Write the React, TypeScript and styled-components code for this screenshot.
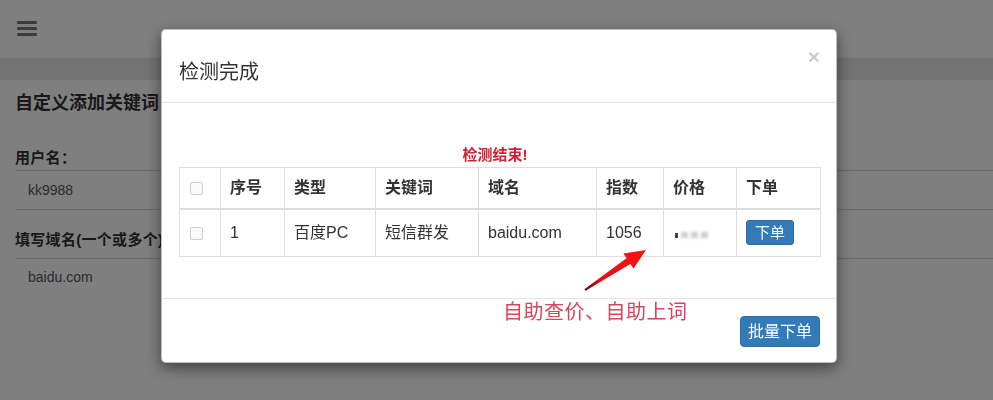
import styled, { createGlobalStyle } from "styled-components";

const GlobalStyle = createGlobalStyle`
  html, body {
    margin: 0;
    padding: 0;
    width: 993px;
    height: 400px;
    overflow: hidden;
    background: #fefefe;
    font-family: "Liberation Sans", "Noto Sans CJK SC", sans-serif;
    color: #333;
  }
  * { box-sizing: border-box; }
`;

const Page = styled.div`
  width: 993px;
  height: 400px;
  overflow: hidden;
`;

const TopBar = styled.div`
  height: 58px;
  display: flex;
  align-items: center;
  padding-left: 17px;
  background: #fff;
  border-bottom: 1px solid #f2f2f2;
`;

const Burger = styled.div`
  display: flex;
  flex-direction: column;
  gap: 3px;
  span {
    display: block;
    width: 20px;
    height: 3px;
    border-radius: 1px;
    background: #777;
  }
`;

const Band = styled.div`
  height: 22px;
  background: #e6e6e6;
`;

const Content = styled.div`
  padding: 11px 0 0 15px;
`;

const PanelTitle = styled.div`
  font-size: 18px;
  font-weight: bold;
  line-height: 24px;
  color: #333;
`;

const Label = styled.div<{ $gap: number }>`
  margin-top: ${(p) => p.$gap}px;
  font-size: 15px;
  font-weight: bold;
  line-height: 20px;
  letter-spacing: 0.3px;
  color: #333;
`;

const Field = styled.div<{ $tall?: boolean }>`
  margin-top: ${(p) => (p.$tall ? 8 : 2)}px;
  height: ${(p) => (p.$tall ? 200 : 40)}px;
  border-top: 1px solid #d6d6d6;
  border-bottom: 1px solid #d6d6d6;
  padding: ${(p) => (p.$tall ? "10px 13px" : "0 13px")};
  display: flex;
  align-items: ${(p) => (p.$tall ? "flex-start" : "center")};
  font-size: 14px;
  color: #555;
  background: #fff;
`;

const Backdrop = styled.div`
  position: fixed;
  inset: 0;
  background: rgba(0, 0, 0, 0.5);
`;

const Modal = styled.div`
  position: fixed;
  top: 29px;
  left: 161px;
  width: 676px;
  background: #fff;
  border: 1px solid rgba(0, 0, 0, 0.25);
  border-radius: 5px;
  box-shadow: 0 5px 15px rgba(0, 0, 0, 0.5);
`;

const ModalHeader = styled.div`
  display: flex;
  justify-content: space-between;
  align-items: flex-start;
  padding: 28px 16px 16px 17px;
  border-bottom: 1px solid #e5e5e5;
`;

const ModalTitle = styled.h4`
  margin: 0;
  font-size: 20px;
  font-weight: normal;
  line-height: 28px;
  color: #333;
`;

const Close = styled.span`
  margin-top: -12px;
  font-size: 21px;
  font-weight: bold;
  line-height: 21px;
  color: #000;
  opacity: 0.2;
`;

const ModalBody = styled.div`
  padding: 42px 17px 41px 17px;
`;

const Notice = styled.div`
  text-align: center;
  font-size: 15px;
  font-weight: bold;
  line-height: 20px;
  color: #cc2233;
  margin-bottom: 2px;
  padding-left: 2px;
  padding-right: 10px;
`;

const Table = styled.table`
  width: 641px;
  border-collapse: collapse;
  table-layout: fixed;
  font-size: 16px;
`;

const Th = styled.th<{ $w: number }>`
  width: ${(p) => p.$w}px;
  text-align: left;
  font-weight: bold;
  line-height: 20px;
  padding: 10px 9px;
  border: 1px solid #ddd;
  border-bottom-width: 2px;
  color: #333;
`;

const Td = styled.td`
  height: 47px;
  line-height: 22px;
  padding: 0 9px;
  border: 1px solid #ddd;
  color: #333;
  vertical-align: middle;
`;

const Check = styled.span`
  display: inline-block;
  width: 13px;
  height: 13px;
  margin-left: 1px;
  vertical-align: middle;
  border: 1px solid #cfcfcf;
  border-radius: 2px;
  background: #fafafa;
`;

const Masked = styled.span`
  display: inline-flex;
  align-items: center;
  gap: 3px;
  padding-left: 2px;
  i {
    display: block;
    width: 3px;
    height: 5px;
    background: #444;
  }
  b {
    display: block;
    width: 7px;
    height: 6px;
    background: #ccc;
    filter: blur(1.5px);
  }
`;

const Button = styled.button<{ $small?: boolean }>`
  display: inline-block;
  vertical-align: middle;
  font-family: inherit;
  font-size: ${(p) => (p.$small ? 15 : 16)}px;
  line-height: ${(p) => (p.$small ? 19 : 21)}px;
  padding: ${(p) => (p.$small ? "2px 8px" : "4px 7px")};
  color: #fff;
  background: #337ab7;
  border: 1px solid #2e6da4;
  border-radius: ${(p) => (p.$small ? 3 : 4)}px;
`;

const ModalFooter = styled.div`
  display: flex;
  justify-content: flex-end;
  padding: 17px 16px 15px;
  border-top: 1px solid #e5e5e5;
`;

const Annotation = styled.svg`
  position: fixed;
  inset: 0;
  pointer-events: none;
`;

const Note = styled.div`
  position: fixed;
  left: 503px;
  top: 299px;
  font-size: 20px;
  line-height: 26px;
  letter-spacing: 0.5px;
  color: #d6455d;
`;

const columns = [
  { key: "check", w: 41 },
  { key: "序号", w: 64 },
  { key: "类型", w: 91 },
  { key: "关键词", w: 103 },
  { key: "域名", w: 118 },
  { key: "指数", w: 67 },
  { key: "价格", w: 73 },
  { key: "下单", w: 84 },
];

export default function App() {
  return (
    <>
      <GlobalStyle />
      <Page>
        <TopBar>
          <Burger>
            <span />
            <span />
            <span />
          </Burger>
        </TopBar>
        <Band />
        <Content>
          <PanelTitle>自定义添加关键词</PanelTitle>
          <Label $gap={33}>用户名：</Label>
          <Field>kk9988</Field>
          <Label $gap={20}>填写域名(一个或多个)</Label>
          <Field $tall>baidu.com</Field>
        </Content>
      </Page>

      <Backdrop />

      <Modal>
        <ModalHeader>
          <ModalTitle>检测完成</ModalTitle>
          <Close>×</Close>
        </ModalHeader>
        <ModalBody>
          <Notice>检测结束!</Notice>
          <Table>
            <thead>
              <tr>
                {columns.map((c) => (
                  <Th key={c.key} $w={c.w}>
                    {c.key === "check" ? <Check /> : c.key}
                  </Th>
                ))}
              </tr>
            </thead>
            <tbody>
              <tr>
                <Td>
                  <Check />
                </Td>
                <Td>1</Td>
                <Td>百度PC</Td>
                <Td>短信群发</Td>
                <Td>baidu.com</Td>
                <Td>1056</Td>
                <Td>
                  <Masked>
                    <i />
                    <b />
                    <b />
                    <b />
                  </Masked>
                </Td>
                <Td>
                  <Button $small>下单</Button>
                </Td>
              </tr>
            </tbody>
          </Table>
        </ModalBody>
        <ModalFooter>
          <Button>批量下单</Button>
        </ModalFooter>
      </Modal>

      <Annotation width="993" height="400" viewBox="0 0 993 400">
        <defs>
          <linearGradient id="arrowFill" x1="585" y1="290" x2="645" y2="250" gradientUnits="userSpaceOnUse">
            <stop offset="0" stopColor="#5a0a10" />
            <stop offset="0.25" stopColor="#e0101a" />
            <stop offset="1" stopColor="#ff1010" />
          </linearGradient>
        </defs>
        <polygon
          points="584.4,289.2 585.6,290.8 630.3,264 633.5,268.5 646,250 623.5,253.6 626.5,258.2"
          fill="url(#arrowFill)"
        />
      </Annotation>
      <Note>自助查价、自助上词</Note>
    </>
  );
}
